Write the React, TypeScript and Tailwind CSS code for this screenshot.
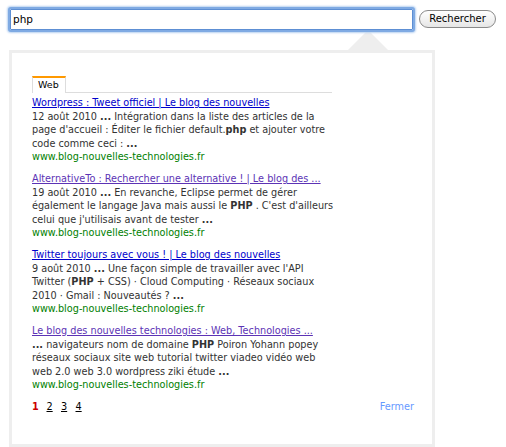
import React from "react";

type Part = string | { b: string };

const results: {
  title: string;
  visited: boolean;
  lines: Part[][];
}[] = [
  {
    title: "Wordpress : Tweet officiel | Le blog des nouvelles",
    visited: false,
    lines: [
      ["12 août 2010 ", { b: "..." }, " Intégration dans la liste des articles de la"],
      ["page d'accueil : Éditer le fichier default.", { b: "php" }, " et ajouter votre"],
      ["code comme ceci : ", { b: "..." }],
    ],
  },
  {
    title: "AlternativeTo : Rechercher une alternative ! | Le blog des ...",
    visited: true,
    lines: [
      ["19 août 2010 ", { b: "..." }, " En revanche, Eclipse permet de gérer"],
      ["également le langage Java mais aussi le ", { b: "PHP" }, " . C'est d'ailleurs"],
      ["celui que j'utilisais avant de tester ", { b: "..." }],
    ],
  },
  {
    title: "Twitter toujours avec vous ! | Le blog des nouvelles",
    visited: false,
    lines: [
      ["9 août 2010 ", { b: "..." }, " Une façon simple de travailler avec l'API"],
      ["Twitter (", { b: "PHP" }, " + CSS) · Cloud Computing · Réseaux sociaux"],
      ["2010 · Gmail : Nouveautés ? ", { b: "..." }],
    ],
  },
  {
    title: "Le blog des nouvelles technologies : Web, Technologies ...",
    visited: true,
    lines: [
      [{ b: "..." }, " navigateurs nom de domaine ", { b: "PHP" }, " Poiron Yohann popey"],
      ["réseaux sociaux site web tutorial twitter viadeo vidéo web"],
      ["web 2.0 web 3.0 wordpress ziki étude ", { b: "..." }],
    ],
  },
];

function Line({ parts }: { parts: Part[] }) {
  return (
    <div className="whitespace-nowrap">
      {parts.map((p, i) =>
        typeof p === "string" ? <span key={i}>{p}</span> : <b key={i} className="font-bold">{p.b}</b>
      )}
    </div>
  );
}

export default function App() {
  return (
    <div
      className="relative w-[506px] h-[447px] overflow-hidden bg-white text-black"
      style={{ fontFamily: '"DejaVu Sans", "Lucida Grande", sans-serif' }}
    >
      <div className="flex items-start pt-[7px] pl-[8px]">
        <div className="relative z-10 w-[407px] h-[25px] rounded-[3px] border-[2px] border-[#7faae3] bg-white shadow-[0_0_2px_1px_#b9d2f1] flex items-center">
          <div className="w-full h-full border border-[#5d8fd4] rounded-[1px] flex items-center pl-[2px] text-[10.5px] text-black">
            php
          </div>
        </div>
        <button className="ml-[4px] mt-[3px] h-[18px] w-[77px] rounded-full border border-[#8a8a8a] bg-gradient-to-b from-white to-[#e6e6e6] text-[10px] leading-[16px] text-black">
          Rechercher
        </button>
      </div>

      <div className="relative ml-[9px] mt-[18px] w-[426px] h-[397px] border-[3px] border-[#eeeeee] pt-[23px] pl-[20px] pr-[18px]">
        <svg className="absolute left-[336px] -top-[23px]" width="40" height="20" viewBox="0 0 40 20">
          <polygon points="0,20 20,0 40,20" fill="#eeeeee" />
        </svg>

        <div className="flex w-[300px] border-b border-[#dddddd]">
          <div className="-mb-px h-[17px] w-[34px] border-t-2 border-t-[#ff9900] border-x border-x-[#dddddd] bg-white pl-[5px] text-[9.5px] leading-[14px] text-black">
            Web
          </div>
        </div>

        <div className="mt-[3px] w-[320px] text-[9.7px] leading-[13.5px]">
          {results.map((r, i) => (
            <div key={i} className="mb-[8.5px]">
              <div className={`whitespace-nowrap underline ${r.visited ? "text-[#5c33b5]" : "text-[#0000cc]"}`}>
                {r.title}
              </div>
              <div className="text-[#333333]">
                {r.lines.map((l, j) => (
                  <Line key={j} parts={l} />
                ))}
              </div>
              <div className="text-[#008000]">www.blog-nouvelles-technologies.fr</div>
            </div>
          ))}
        </div>

        <div className="flex items-center justify-between text-[9.7px] leading-[13.5px]">
          <div className="flex gap-[8.5px]">
            <span className="w-[6px] font-bold text-[#cc0000]">1</span>
            <span className="w-[6px] underline text-black">2</span>
            <span className="w-[6px] underline text-black">3</span>
            <span className="w-[6px] underline text-black">4</span>
          </div>
          <span className="text-[#6699ff]">Fermer</span>
        </div>
      </div>
    </div>
  );
}
